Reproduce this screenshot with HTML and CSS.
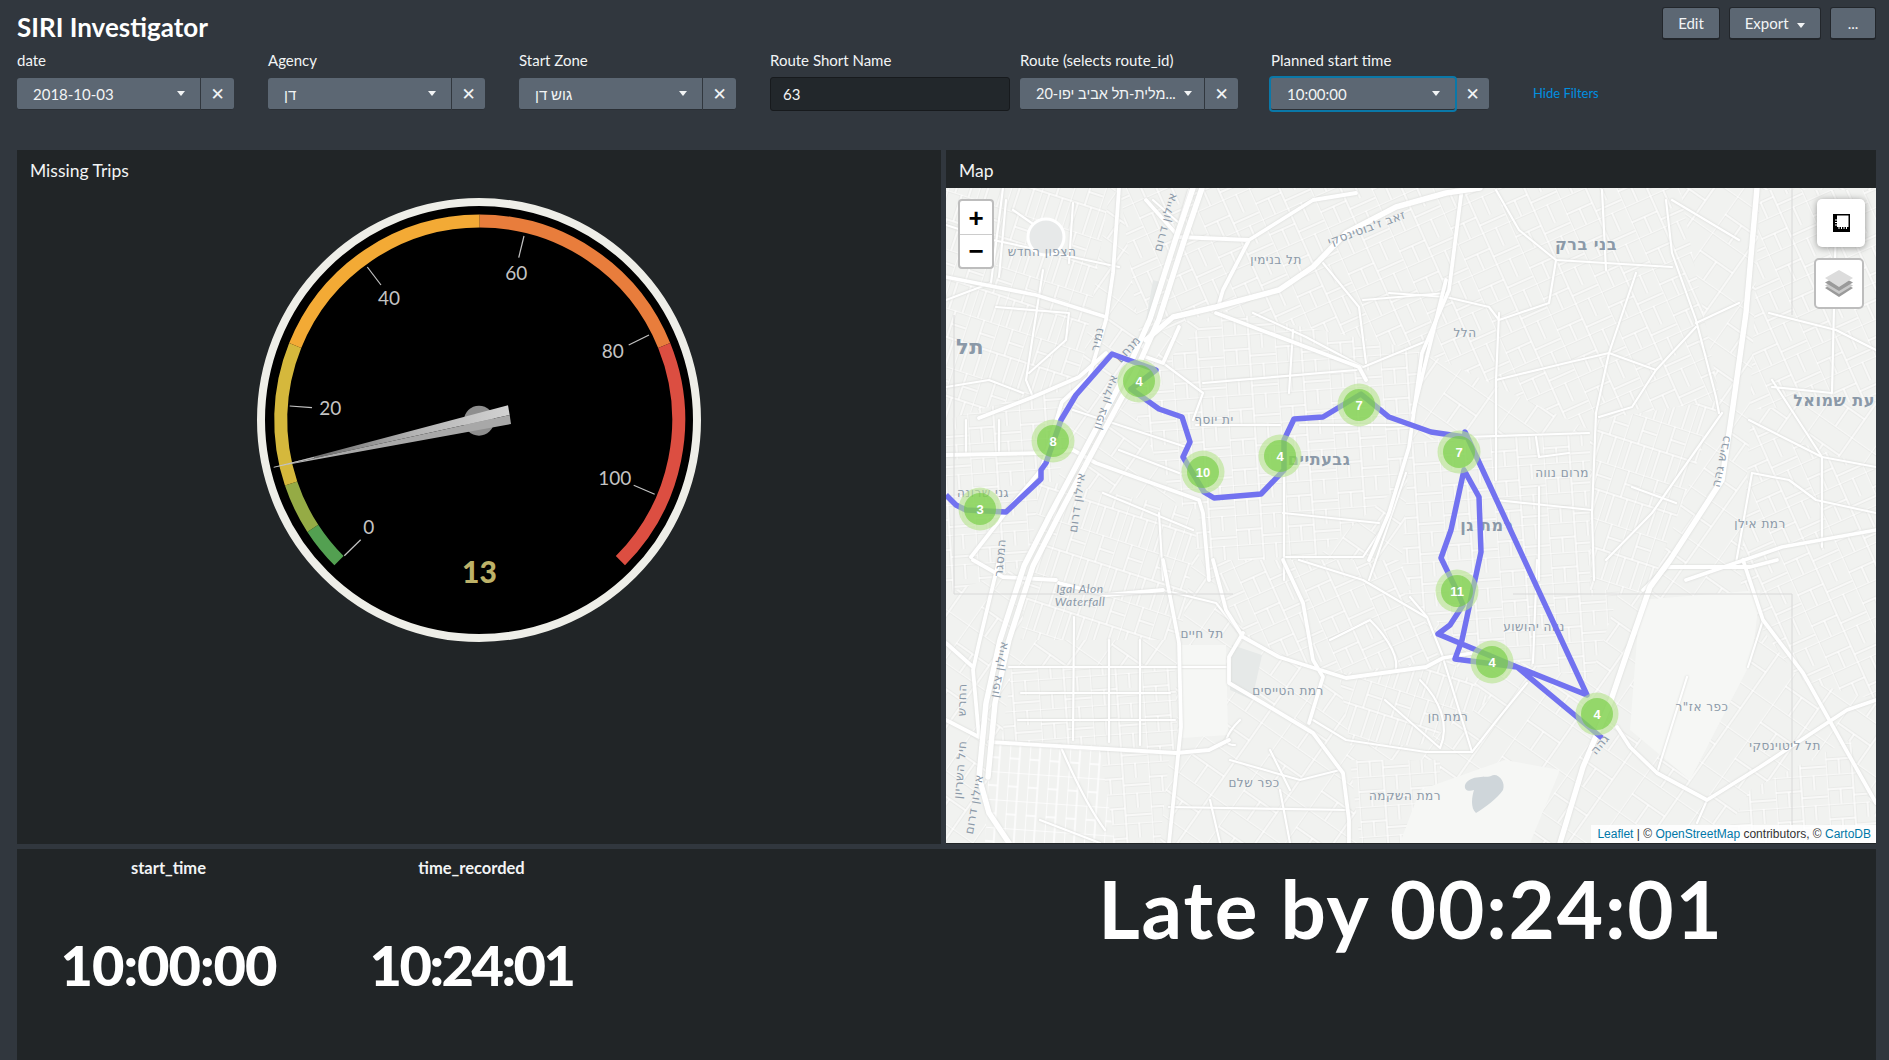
FILE: index.html
```html
<!DOCTYPE html>
<html lang="en">
<head>
    <meta charset="UTF-8">
    <meta name="viewport" content="width=device-width, initial-scale=1.0">
    <title>SIRI Investigator</title>
    <link rel="stylesheet" href="styles.css">
</head>
<body>
    <header class="page-header">
        <h1>SIRI Investigator</h1>
        <div class="actions">
            <button class="btn">Edit</button>
            <button class="btn btn-export">Export <span class="caret"></span></button>
            <button class="btn btn-more">...</button>
        </div>
    </header>

    <div class="filters">
        <div class="filter">
            <label>date</label>
            <div class="control">
                <div class="select"><span class="select-text">2018-10-03</span><span class="caret"></span></div>
                <button class="clear">&#10005;</button>
            </div>
        </div>
        <div class="filter">
            <label>Agency</label>
            <div class="control">
                <div class="select"><span class="select-text">דן</span><span class="caret"></span></div>
                <button class="clear">&#10005;</button>
            </div>
        </div>
        <div class="filter">
            <label>Start Zone</label>
            <div class="control">
                <div class="select"><span class="select-text">גוש דן</span><span class="caret"></span></div>
                <button class="clear">&#10005;</button>
            </div>
        </div>
        <div class="filter filter-input">
            <label>Route Short Name</label>
            <input class="text-input" type="text" value="63">
        </div>
        <div class="filter filter-wide">
            <label>Route (selects route_id)</label>
            <div class="control">
                <div class="select select-route"><span class="select-text">20-מלית-תל אביב יפו...</span><span class="caret"></span></div>
                <button class="clear">&#10005;</button>
            </div>
        </div>
        <div class="filter filter-wide">
            <label>Planned start time</label>
            <div class="control">
                <div class="select select-focus"><span class="select-text">10:00:00</span><span class="caret"></span></div>
                <button class="clear">&#10005;</button>
            </div>
        </div>
        <a class="hide-filters" href="#">Hide Filters</a>
    </div>

    <main class="dashboard">
        <section class="panel">
            <h2 class="panel-title">Missing Trips</h2>
            <svg class="gauge" viewBox="-230 -232 460 464" width="460" height="464">
                <defs>
                    <linearGradient id="needleTop" x1="0" y1="0" x2="1" y2="0">
                        <stop offset="0" stop-color="#a0a0a0"/>
                        <stop offset="0.2" stop-color="#707070"/>
                        <stop offset="0.6" stop-color="#b4b4b4"/>
                        <stop offset="1" stop-color="#d2d2d2"/>
                    </linearGradient>
                    <linearGradient id="needleBottom" x1="0" y1="0" x2="1" y2="0">
                        <stop offset="0" stop-color="#c0c0c0"/>
                        <stop offset="0.3" stop-color="#a8a8a8"/>
                        <stop offset="1" stop-color="#a8a8a8"/>
                    </linearGradient>
                </defs>
                <circle r="218" fill="#000" stroke="#eeeee8" stroke-width="8"/>
                <g class="gauge-band">
                    <path stroke="#53a051" d="M-140.700 140.700A199 199 0 0 1 -166.900 108.400"/>
                    <path stroke="#95ab45" d="M-166.900 108.400A199 199 0 0 1 -188.600 63.500"/>
                    <path stroke="#d5b83c" d="M-188.600 63.500A199 199 0 0 1 -184.500 -74.500"/>
                    <path stroke="#f3aa35" d="M-184.500 -74.500A199 199 0 0 1 0 -199"/>
                    <path stroke="#e87d3c" d="M0 -199A199 199 0 0 1 184.500 -74.500"/>
                    <path stroke="#dc4e41" d="M184.500 -74.500A199 199 0 0 1 140.700 140.700"/>
                </g>
                <g class="gauge-ticks">
                    <path d="M-134.700 135.700L-118.300 119.700"/>
                    <path d="M-189.300 -14L-167 -12.300"/>
                    <path d="M-111.700 -153L-98 -135"/>
                    <path d="M45 -184L39.700 -162.300"/>
                    <path d="M170 -85L149.700 -75"/>
                    <path d="M175.700 74.300L154.700 65.300"/>
                </g>
                <g class="gauge-labels">
                    <text x="-110.300" y="106.700">0</text>
                    <text x="-148.700" y="-12.300">20</text>
                    <text x="-90" y="-122.700">40</text>
                    <text x="37.300" y="-147.700">60</text>
                    <text x="133.700" y="-69.300">80</text>
                    <text x="135.700" y="57.700">100</text>
                </g>
                <text class="gauge-value" x="0.500" y="151">13</text>
                <circle cx="0" cy="0.700" r="15" fill="#8e8e8e"/>
                <path fill="url(#needleTop)" d="M-205.300 47.300L29 -14.700L30.700 -5Z"/>
                <path fill="url(#needleBottom)" d="M-205.300 47.300L30.700 -5L32 4Z"/>
                <path class="needle-tip" d="M-205.300 47.300L-165 37.500"/>
            </svg>
        </section>

        <section class="panel">
            <h2 class="panel-title">Map</h2>
            <div class="map">
                <svg class="map-canvas" viewBox="946 188 930 655" width="930" height="655">
                    <defs>
                        <pattern id="blocksA" width="52" height="30" patternUnits="userSpaceOnUse" patternTransform="rotate(-4)">
                            <rect width="52" height="30" class="block"/>
                            <path d="M0 0H52M0 15H26M26 0V30M0 0V30M39 0V15M13 15V30M26 22H52" class="street-case"/>
                            <path d="M0 0H52M0 15H26M26 0V30M0 0V30M39 0V15M13 15V30M26 22H52" class="street"/>
                        </pattern>
                        <pattern id="blocksB" width="30" height="56" patternUnits="userSpaceOnUse" patternTransform="rotate(18)">
                            <rect width="30" height="56" class="block"/>
                            <path d="M0 0H30M0 28H30M0 0V56M15 0V28M8 28V56M22 28V56M15 14H30" class="street-case"/>
                            <path d="M0 0H30M0 28H30M0 0V56M15 0V28M8 28V56M22 28V56M15 14H30" class="street"/>
                        </pattern>
                        <pattern id="blocksC" width="56" height="34" patternUnits="userSpaceOnUse" patternTransform="rotate(-24)">
                            <rect width="56" height="34" class="block"/>
                            <path d="M0 0H56M0 17H28M28 0V34M0 0V34M42 0V20M14 17V34M28 26H56" class="street-case"/>
                            <path d="M0 0H56M0 17H28M28 0V34M0 0V34M42 0V20M14 17V34M28 26H56" class="street"/>
                        </pattern>
                        <pattern id="blocksD" width="64" height="44" patternUnits="userSpaceOnUse" patternTransform="rotate(35)">
                            <rect width="64" height="44" class="block"/>
                            <path d="M0 0H64M0 22H40M40 0V44M0 0V44M20 22V44" class="street-case"/>
                            <path d="M0 0H64M0 22H40M40 0V44M0 0V44M20 22V44" class="street"/>
                        </pattern>
                        <pattern id="blocksE" width="20" height="28" patternUnits="userSpaceOnUse" patternTransform="rotate(4)">
                            <rect width="20" height="28" class="block"/>
                            <path d="M0 0H20M0 0V28M10 0V28M0 14H10" class="street"/>
                        </pattern>
                    </defs>

                    <rect x="946" y="188" width="930" height="655" fill="url(#blocksD)"/>

                    <!-- street texture -->
                    <path fill="url(#blocksB)" d="M946 188H1110L1080 380L946 420Z"/>
                    <path fill="url(#blocksA)" d="M946 420L1080 380L1040 560L946 594Z"/>
                    <path fill="url(#blocksC)" d="M1120 188H1460L1420 350L1216 310L1140 340Z"/>
                    <path fill="url(#blocksA)" d="M1130 400L1216 310L1420 350L1406 480L1290 580L1210 580Z"/>
                    <path fill="url(#blocksB)" d="M1040 480L1200 510L1180 640L1020 640Z"/>
                    <path fill="url(#blocksC)" d="M1460 188H1680L1720 400L1590 430L1420 350Z"/>
                    <path fill="url(#blocksA)" d="M1410 440L1590 435L1590 600L1400 590Z"/>
                    <path fill="url(#blocksB)" d="M1596 420L1720 400L1650 590L1590 600Z"/>
                    <path fill="url(#blocksA)" d="M1012 668H1175L1178 750H1000Z"/>
                    <path fill="url(#blocksE)" d="M990 745H1100L1120 843H985Z"/>
                    <path fill="url(#blocksA)" d="M1100 750H1170L1160 843H1115Z"/>
                    <path fill="url(#blocksD)" d="M1180 640L1340 760L1350 843H1170L1180 760Z"/>
                    <path fill="url(#blocksC)" d="M1200 560H1400L1440 660L1330 675L1250 640Z"/>
                    <path fill="url(#blocksB)" d="M1340 680L1450 660L1490 700L1420 745L1350 745Z"/>
                    <path fill="url(#blocksA)" d="M1350 760L1440 760L1440 843H1360Z"/>
                    <path fill="url(#blocksA)" d="M1400 590H1620L1590 680L1470 650Z"/>
                    <path fill="url(#blocksC)" d="M1760 190H1876V400L1750 410Z"/>
                    <path fill="url(#blocksC)" d="M1750 425L1876 470V700L1800 680L1740 600Z"/>
                    <path fill="url(#blocksA)" d="M1750 790L1850 740L1876 820V843H1720Z"/>

                    <!-- open ground -->
                    <path class="ground" d="M1640 600L1760 590L1752 660L1690 780L1630 730Z"/>
                    <path class="ground" d="M1420 790L1505 760L1560 770L1530 843H1400Z"/>
                    <path class="ground" d="M1180 645L1226 645L1228 735L1182 738Z"/>
                    <path class="green" d="M1232 645L1262 655L1252 700L1230 690Z"/>
                    <path class="green" d="M1153 280L1160 282L1153 322L1146 320Z"/>
                    <path class="water" d="M1465 785C1470 774 1488 778 1491 776C1498 772 1506 782 1503 790C1498 798 1484 808 1476 813C1470 808 1472 796 1474 790C1468 792 1464 790 1465 785Z"/>

                    <!-- minor roads -->
                    <g class="road-minor">
                        <path d="M1119 267L993 240M946 225L993 240M1003 188L991 283L946 300"/>
                        <path d="M1043 270L1026 380L1033 397"/>
                        <path d="M1163 363L1203 393L1193 420M1203 383L1356 370L1429 340"/>
                        <path d="M1363 300L1446 293M1323 263L1359 307L1366 363"/>
                        <path d="M1389 293L1446 297L1489 307L1499 320L1549 303L1556 260"/>
                        <path d="M1499 313L1496 380L1496 480M1465 437L1589 433"/>
                        <path d="M1496 380L1566 363L1609 353L1656 370M1696 327L1656 370L1632 407L1599 417"/>
                        <path d="M1636 273L1609 353L1596 413L1592 513L1594 580"/>
                        <path d="M1496 190L1519 230L1556 260L1672 267"/>
                        <path d="M1074 617L1073 740M1009 667H1226"/>
                        <path d="M1169 807L1349 810M1299 560L1363 580L1426 617"/>
                        <path d="M1313 720L1346 740L1426 752L1472 752L1497 720L1527 683"/>
                        <path d="M1537 560L1533 663M1443 658L1472 752"/>
                        <path d="M1657 773L1687 677M1763 620L1748 667"/>
                        <path d="M1752 473L1789 480L1816 500L1876 513"/>
                        <path d="M1707 800L1697 823M1300 425H1413M1196 425H1280"/>
                        <path d="M1163 590L1216 603L1239 632M1410 597L1427 617L1443 657"/>
                        <path d="M1073 410L1186 447M1284 440V580M1406 473L1369 580"/>
                        <path d="M1666 200L1672 253L1696 320L1716 397L1719 413"/>
                        <path d="M1749 420L1822 457L1876 467"/>
                        <path d="M1006 200L999 277M1013 210L1046 233M1073 203L1069 263"/>
                        <path d="M996 307L1069 313L1066 340L1029 373M946 387L989 380L1023 393"/>
                        <path d="M966 420V453M999 420V453M1119 450L1179 473M1103 493L1193 530"/>
                        <path d="M1159 513L1163 580M1283 513L1379 523M1286 557H1363L1379 533"/>
                        <path d="M1293 330L1289 393M1253 313L1306 337L1363 367"/>
                        <path d="M1602 190L1606 270M1536 437L1539 457L1569 453M1496 500L1592 510"/>
                        <path d="M1539 487V580M1606 560L1652 513L1722 413M1632 487L1676 503"/>
                        <path d="M1772 380L1822 457V547M1772 387L1832 393L1836 220"/>
                        <path d="M1752 473L1736 563M1769 313L1836 330L1876 350"/>
                        <path d="M1672 200L1739 240M1696 323L1739 303"/>
                        <path d="M1021 693H1170M1018 720H1175M1109 640V742M1140 640V745"/>
                        <path d="M1230 760L1300 780L1340 770M1210 800L1220 843M1280 790L1290 843"/>
                        <path d="M1240 720C1225 735 1222 745 1235 745M1270 750L1290 790"/>
                        <path d="M1370 620C1390 640 1400 660 1395 672M1330 640L1370 620"/>
                        <path d="M1420 680C1440 700 1450 725 1440 748M1385 700L1440 748"/>
                        <path d="M1040 820L1100 843M1060 745C1075 780 1090 810 1105 830"/>
                        <path d="M1153 200L1179 223L1189 190"/>
                    </g>

                    <!-- main roads -->
                    <g class="road-mid">
                        <path d="M1119 188L1113 273L1106 320L1089 377L1062 402L1041 470L1006 512L971 557"/>
                        <path d="M946 277L1036 295L1106 317"/>
                        <path d="M979 418L1033 397L1079 377L1106 353"/>
                        <path d="M946 455L1046 453L1073 450L1096 463L1199 500L1203 513L1209 580"/>
                        <path d="M1146 200L1179 237L1249 240L1313 200L1356 193M1249 240L1223 290L1218 307"/>
                        <path d="M1216 313L1359 367L1366 380"/>
                        <path d="M1462 188L1449 290L1422 353L1409 447L1389 513L1369 560"/>
                        <path d="M1446 280L1413 413"/>
                        <path d="M1686 580L1782 547L1876 530"/>
                        <path d="M1163 560L1179 643L1181 727L1169 843"/>
                        <path d="M1213 560L1226 610L1243 637L1279 657L1346 678L1426 667L1443 658L1490 650"/>
                        <path d="M1243 633L1229 657L1229 683L1263 703L1313 733L1343 773L1349 820V843"/>
                        <path d="M1283 560L1303 603L1313 660L1323 677L1309 723"/>
                        <path d="M989 742L1176 753L1209 750L1229 740"/>
                        <path d="M999 560L979 643L973 670L979 737M946 643L973 667M946 720L979 737"/>
                        <path d="M1056 580L1003 577L973 560M1163 590L1106 595L1059 583"/>
                        <path d="M1617 727L1630 747L1657 773L1707 800L1760 767L1847 710L1876 700"/>
                        <path d="M1743 560L1763 620L1803 673L1850 757L1876 803"/>
                        <path d="M1643 590L1667 567L1750 567L1777 560"/>
                        <path d="M1146 340L1159 323L1186 313M1143 347L1159 327M1179 327L1163 363L1146 357"/>
                    </g>
                    <g class="road-major">
                        <path d="M1193 188L1175 241L1150 319L1126 373L1090 440L1050 515L1024 566L1000 640L986 703L979 777L989 813L1009 843"/>
                        <path d="M1202 188L1184 241L1159 319L1135 373L1099 440L1059 515L1033 566L1009 640L995 703L988 777"/>
                        <path d="M1146 340L1173 317L1216 307L1279 290L1313 267L1346 233L1396 207L1446 193L1480 188"/>
                        <path d="M1757 188L1746 313L1732 413L1722 480L1670 560L1650 587L1627 653L1610 703L1583 767L1560 843"/>
                    </g>
                    <circle class="road-ring" cx="1046" cy="237" r="18"/>

                    <!-- tile seams -->
                    <path class="seam" d="M954 315V594H1233M1513 594H1792V825M1792 188V315"/>

                    <!-- place names -->
                    <g class="map-labels">
                        <text x="1042" y="256">הצפון החדש</text>
                        <text x="1276" y="264">תל בנימין</text>
                        <text x="1368" y="232" transform="rotate(-20 1368 232)">זאב ז'בוטינסקי</text>
                        <text class="label-big" x="970" y="354">תל</text>
                        <text x="1101" y="340" transform="rotate(-78 1101 340)">נמיר</text>
                        <text x="1131" y="352" transform="rotate(-48 1131 352)">מנחם</text>
                        <text x="1169" y="223" transform="rotate(-75 1169 223)">איילון דרום</text>
                        <text x="1109" y="403" transform="rotate(-72 1109 403)">איילון צפון</text>
                        <text x="1081" y="503" transform="rotate(-82 1081 503)">איילון דרום</text>
                        <text x="1004" y="558" transform="rotate(-85 1004 558)">המסגר</text>
                        <text x="983" y="497">גני שרונה</text>
                        <text x="1214" y="424">ית יוסף</text>
                        <text class="label-mid" x="1319" y="465">גבעתיים</text>
                        <text class="label-mid" x="1586" y="250">בני ברק</text>
                        <text x="1465" y="337">הלל</text>
                        <text x="1562" y="477">מרום נווה</text>
                        <text class="label-mid" x="1487" y="531">רמת גן</text>
                        <text x="1760" y="528">רמת אילן</text>
                        <text class="label-mid" x="1834" y="406">עת שמואל</text>
                        <text x="1725" y="462" transform="rotate(-78 1725 462)">כביש גהה</text>
                        <text class="label-italic" x="1080" y="593">Igal Alon</text>
                        <text class="label-italic" x="1080" y="606">Waterfall</text>
                        <text x="1202" y="638">תל חיים</text>
                        <text x="1288" y="695">רמת הטייסים</text>
                        <text x="1254" y="787">כפר שלם</text>
                        <text x="1405" y="800">רמת השקמה</text>
                        <text x="1448" y="721">רמת חן</text>
                        <text x="1534" y="631">נווה יהושוע</text>
                        <text x="1702" y="711">כפר אז"ר</text>
                        <text x="1785" y="750">תל ליטוינסקי</text>
                        <text x="966" y="700" transform="rotate(-88 966 700)">החרש</text>
                        <text x="964" y="770" transform="rotate(-85 964 770)">חיל השריון</text>
                        <text x="1003" y="670" transform="rotate(-80 1003 670)">איילון צפון</text>
                        <text x="978" y="805" transform="rotate(-80 978 805)">איילון דרום</text>
                        <text x="1603" y="747" transform="rotate(-50 1603 747)">גהה</text>
                    </g>

                    <!-- route -->
                    <path class="route" d="M946 495L956 505L966 510L1006 512L1041 479L1041 470L1046 463L1061 420L1076 395L1112 354L1156 370L1131 389L1159 409L1182 417L1190 442L1183 457L1204 492L1214 498L1261 494L1284 470L1284 440L1294 419L1323 417L1361 394L1389 417L1431 432L1465 437L1465 432L1587 695L1517 667L1455 659L1462 640L1481 552L1479 497L1464 470L1451 530L1441 558L1457 591L1463 605L1450 625L1438 634L1517 667L1577 717L1602 738"/>

                    <!-- clusters -->
                    <g class="cluster" transform="translate(980 509)"><circle class="cluster-out" r="21.500"/><circle class="cluster-in" r="16"/><text y="4.500">3</text></g>
                    <g class="cluster" transform="translate(1053 441)"><circle class="cluster-out" r="21.500"/><circle class="cluster-in" r="16"/><text y="4.500">8</text></g>
                    <g class="cluster" transform="translate(1139 381)"><circle class="cluster-out" r="21.500"/><circle class="cluster-in" r="16"/><text y="4.500">4</text></g>
                    <g class="cluster" transform="translate(1203 472)"><circle class="cluster-out" r="21.500"/><circle class="cluster-in" r="16"/><text y="4.500">10</text></g>
                    <g class="cluster" transform="translate(1280 456)"><circle class="cluster-out" r="21.500"/><circle class="cluster-in" r="16"/><text y="4.500">4</text></g>
                    <g class="cluster" transform="translate(1359 405)"><circle class="cluster-out" r="21.500"/><circle class="cluster-in" r="16"/><text y="4.500">7</text></g>
                    <g class="cluster" transform="translate(1459 452)"><circle class="cluster-out" r="21.500"/><circle class="cluster-in" r="16"/><text y="4.500">7</text></g>
                    <g class="cluster" transform="translate(1457 591)"><circle class="cluster-out" r="21.500"/><circle class="cluster-in" r="16"/><text y="4.500">11</text></g>
                    <g class="cluster" transform="translate(1492 662)"><circle class="cluster-out" r="21.500"/><circle class="cluster-in" r="16"/><text y="4.500">4</text></g>
                    <g class="cluster" transform="translate(1597 714)"><circle class="cluster-out" r="21.500"/><circle class="cluster-in" r="16"/><text y="4.500">4</text></g>
                </svg>

                <div class="zoom-control">
                    <button class="zoom-btn">+</button>
                    <button class="zoom-btn">&#8722;</button>
                </div>
                <div class="measure-control">
                    <svg viewBox="0 0 17 18" width="17" height="18">
                        <path fill="#000" d="M0 0H17V18H0Z"/>
                        <path fill="#fff" d="M4 1.500H15.500V13H14V15H13V13H11.500V15H10.500V13H9V15H8V13H6.500V15H5.500V13H4V11.500H2V10.500H4V9H2V8H4V6.500H2V5.500H4Z"/>
                    </svg>
                </div>
                <div class="layers-control">
                    <svg viewBox="0 0 28 27" width="28" height="27">
                        <path fill="#9a9a9a" d="M14 10L28 18L14 27L0 18Z"/>
                        <path fill="#c9c9c9" d="M14 8L28 15.500L14 24L0 15.500Z"/>
                        <path fill="#9a9a9a" d="M14 5L28 12.500L14 21L0 12.500Z"/>
                        <path fill="#dcdcdc" d="M14 0L28 8L14 17L0 8Z"/>
                    </svg>
                </div>
                <div class="attribution"><a href="#">Leaflet</a> | &copy; <a href="#">OpenStreetMap</a> contributors, &copy; <a href="#">CartoDB</a></div>
            </div>
        </section>

        <section class="panel panel-bottom">
            <div class="values">
                <div class="value-cell">
                    <div class="value-name">start_time</div>
                    <div class="value-big">10:00:00</div>
                </div>
                <div class="value-cell">
                    <div class="value-name">time_recorded</div>
                    <div class="value-big value-tight">10:24:01</div>
                </div>
            </div>
            <div class="late-text">Late by 00:24:01</div>
        </section>
    </main>
</body>
</html>
```

FILE: styles.css
```css
* {
    box-sizing: border-box;
}
html, body {
    margin: 0;
    height: 100%;
}
body {
    width: 1889px;
    height: 1060px;
    overflow: hidden;
    padding: 0 13px 0 17px;
    background-color: #31373e;
    color: #f2f4f5;
    font-family: Lato, "Liberation Sans", sans-serif;
    font-size: 15px;
}
.page-header {
    display: flex;
    justify-content: space-between;
    align-items: flex-start;
    height: 50px;
    padding-top: 7px;
}
h1 {
    margin: 5px 0 0;
    font-size: 26px;
    font-weight: 700;
    line-height: 30px;
    color: #fff;
}
.actions {
    display: flex;
    gap: 9px;
}
.btn {
    height: 33px;
    padding: 0;
    border: 1px solid #22262b;
    border-bottom-width: 2px;
    border-radius: 3px;
    background-color: #5c6773;
    color: #f2f4f5;
    font: inherit;
    font-size: 15px;
}
.actions .btn {
    width: 58px;
}
.actions .btn-export {
    width: 92px;
}
.actions .btn-more {
    width: 46px;
}
.caret {
    display: inline-block;
    width: 0;
    height: 0;
    margin-left: 5px;
    border-left: 4px solid transparent;
    border-right: 4px solid transparent;
    border-top: 5px solid #f2f4f5;
    vertical-align: middle;
}
.filters {
    display: flex;
    align-items: flex-start;
    height: 100px;
}
.filter {
    width: 217px;
    margin-right: 34px;
}
.filter-input {
    width: 240px;
    margin-right: 10px;
}
.filter-wide {
    width: 218px;
    margin-right: 33px;
}
.filter label {
    display: block;
    height: 28px;
    line-height: 20px;
    font-size: 15px;
}
.control {
    display: flex;
    height: 32px;
}
.select {
    display: flex;
    flex: 1;
    align-items: center;
    justify-content: space-between;
    min-width: 0;
    padding: 0 15px 0 16px;
    background-color: #5c6773;
    border-radius: 3px 0 0 3px;
    border-bottom: 1px solid #2a2f35;
}
.select-route {
    padding-right: 12px;
    font-size: 14.500px;
}
.select-text {
    white-space: nowrap;
}
.select-focus {
    box-shadow: 0 0 0 2px #0a78a8;
    border-radius: 2px;
    position: relative;
}
.clear {
    width: 34px;
    padding: 0;
    border: none;
    border-left: 1px solid #31373e;
    border-bottom: 1px solid #2a2f35;
    border-radius: 0 3px 3px 0;
    background-color: #5c6773;
    color: #f2f4f5;
    font-size: 17px;
    font-family: "DejaVu Sans", sans-serif;
}
.text-input {
    display: block;
    width: 100%;
    height: 34px;
    margin-top: -1px;
    padding: 0 12px;
    border: 1px solid #171a1d;
    border-radius: 3px;
    background-color: #22272b;
    color: #f2f4f5;
    font: inherit;
    font-size: 15px;
}
.hide-filters {
    margin: 33px 0 0 11px;
    color: #0090e0;
    font-size: 13px;
    line-height: 20px;
    text-decoration: none;
}
.dashboard {
    display: grid;
    grid-template-columns: 924px 930px;
    grid-template-rows: 694px 211px;
    gap: 5px;
}
.panel {
    background-color: #212527;
    min-width: 0;
}
.panel-title {
    margin: 0;
    height: 38px;
    padding: 0 13px;
    font-size: 17.500px;
    font-weight: 400;
    line-height: 42px;
}
.gauge {
    display: block;
    margin: 0 auto;
}
.gauge-band {
    transform: translateX(0.700px);
}
.gauge-band path {
    fill: none;
    stroke-width: 13;
}
.gauge-ticks path {
    stroke: #c4c4c4;
    stroke-width: 1.200;
}
.gauge-labels text {
    fill: #c4c4c4;
    font-size: 19px;
    font-weight: 400;
    text-anchor: middle;
    dominant-baseline: central;
}
.gauge-value {
    fill: #bdb268;
    font-size: 30px;
    font-weight: 900;
    text-anchor: middle;
    dominant-baseline: central;
}
.needle-tip {
    stroke: #c8c8c8;
    stroke-width: 0.900;
}
.map {
    position: relative;
    width: 930px;
    height: 655px;
    overflow: hidden;
}
.map-canvas {
    display: block;
}
.block {
    fill: #f1f2f0;
}
.street {
    fill: none;
    stroke: #fff;
    stroke-width: 1.500;
}
.street-case {
    fill: none;
    stroke: #e3e4e2;
    stroke-width: 2.800;
}
.ground {
    fill: #f6f7f5;
}
.green {
    fill: #e6e9e8;
}
.water {
    fill: #cfd6da;
}
.road-minor,
.road-mid,
.road-major {
    filter: drop-shadow(0 0 1px #d4d5d3);
}
.road-minor path,
.road-mid path,
.road-major path {
    fill: none;
    stroke: #fff;
    stroke-linejoin: round;
    stroke-linecap: round;
}
.road-minor path {
    stroke-width: 2.200;
}
.road-mid path {
    stroke-width: 3.800;
}
.road-major path {
    stroke-width: 5.500;
}
.road-ring {
    fill: #e7e9e9;
    stroke: #fff;
    stroke-width: 3;
}
.seam {
    fill: none;
    stroke: #d8d8d8;
    stroke-width: 1;
}
.map-labels text {
    fill: #8b99a8;
    font-family: "DejaVu Sans", sans-serif;
    font-size: 12px;
    letter-spacing: 0.500px;
    text-anchor: middle;
}
.map-labels .label-mid {
    font-size: 16px;
    font-weight: 700;
}
.map-labels .label-big {
    font-size: 21px;
    font-weight: 700;
}
.map-labels .label-italic {
    font-family: Lato, sans-serif;
    font-style: italic;
}
.route {
    fill: none;
    stroke: #7272f0;
    stroke-width: 5.500;
    stroke-linejoin: round;
}
.cluster-out {
    fill: rgba(181, 226, 140, 0.6);
}
.cluster-in {
    fill: rgba(110, 204, 57, 0.6);
}
.cluster text {
    fill: #fff;
    font-family: "Liberation Sans", sans-serif;
    font-size: 13px;
    font-weight: 700;
    text-anchor: middle;
}
.zoom-control {
    position: absolute;
    top: 11px;
    left: 12px;
    display: flex;
    flex-direction: column;
    width: 36px;
    border: 2px solid #bdbdbd;
    border-radius: 4px;
    background-color: #fff;
}
.zoom-btn {
    height: 33px;
    padding: 0;
    border: none;
    background: none;
    color: #000;
    font-family: "Liberation Sans", sans-serif;
    font-size: 26px;
    font-weight: 700;
    line-height: 30px;
}
.zoom-btn + .zoom-btn {
    border-top: 1px solid #ccc;
}
.measure-control {
    position: absolute;
    top: 11px;
    left: 871px;
    display: flex;
    align-items: center;
    justify-content: center;
    width: 48px;
    height: 48px;
    border-radius: 5px;
    background-color: #fff;
    box-shadow: 0 1px 7px rgba(0, 0, 0, 0.4);
}
.layers-control {
    position: absolute;
    top: 70px;
    left: 868px;
    display: flex;
    align-items: center;
    justify-content: center;
    width: 50px;
    height: 51px;
    border: 2px solid #bdbdbd;
    border-radius: 5px;
    background-color: #fff;
}
.attribution {
    position: absolute;
    right: 0;
    bottom: 0;
    padding: 0 5px 0 6px;
    background-color: rgba(255, 255, 255, 0.85);
    color: #333;
    font-family: "Liberation Sans", sans-serif;
    font-size: 12px;
    line-height: 18px;
}
.attribution a {
    color: #0078a8;
    text-decoration: none;
}
.panel-bottom {
    display: grid;
    grid-column: 1 / 3;
    grid-template-columns: 929px 930px;
}
.values {
    display: grid;
    grid-template-columns: 303px 303px;
    align-content: start;
}
.value-cell {
    text-align: center;
}
.value-name {
    margin-top: 9px;
    font-size: 16.500px;
    font-weight: 700;
    line-height: 20px;
}
.value-big {
    margin-top: 52px;
    color: #fff;
    font-size: 56px;
    font-weight: 900;
    letter-spacing: -1px;
    line-height: 70px;
}
.value-tight {
    letter-spacing: -2.500px;
}
.late-text {
    padding-top: 13px;
    color: #fff;
    font-size: 80px;
    font-weight: 700;
    letter-spacing: 1.800px;
    line-height: 92px;
    text-align: center;
}
```
